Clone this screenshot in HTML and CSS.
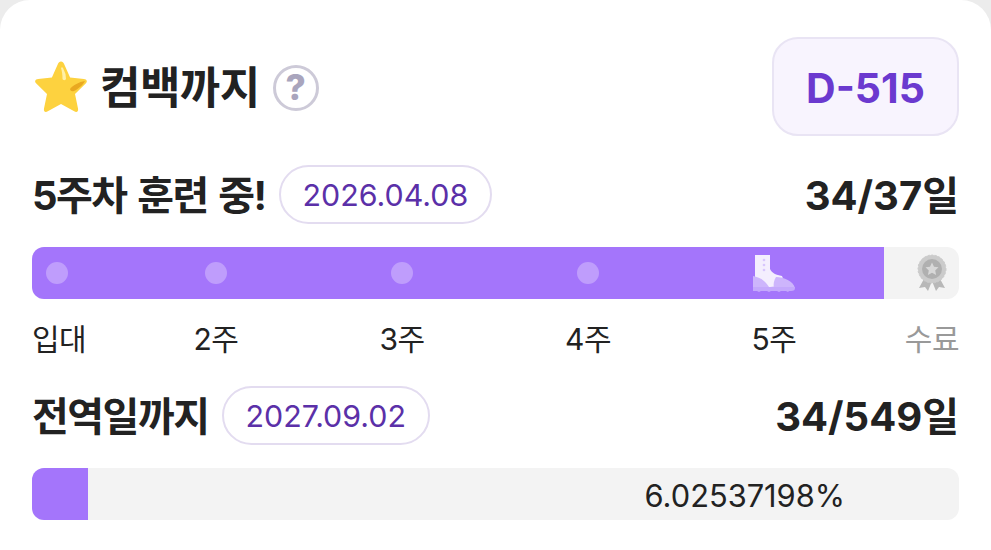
FILE: index.html
```html
<!DOCTYPE html>
<html lang="ko">
<head>
  <meta charset="UTF-8">
  <title>컴백까지</title>
  <link rel="stylesheet" href="styles.css">
</head>
<body>
<div class="card">
  <div class="head">
    <div class="head-title">
      <svg class="star" viewBox="0 0 54 54">
        <path d="M27 1.500c1.600 0 2.400 1 3.100 2.600l6 13.400 13.800 1.500c3 .3 3.900 2.600 1.800 4.600L41 34l3 14.500c.6 3-1.200 4.300-3.800 2.800L27 44l-13.200 7.300c-2.600 1.500-4.400.2-3.800-2.800L13 34 2.300 23.600c-2.100-2-1.200-4.300 1.800-4.600l13.800-1.500 6-13.400c.7-1.600 1.500-2.600 3.100-2.600z" fill="#fdd23f"/>
        <path d="M27 8c1 3 1.500 7 1.500 11 .5 1.500 3 1.500 3.500 0l-.5-5L29 8c-.5-1-1.500-1-2 0z" fill="#fff0a8"/>
        <path d="M36 29c3-4 9-7 15-8-2 4-7 8-11 10-2 .5-3.500.2-4-2z" fill="#e9a820"/>
      </svg>
      <h1 class="title">컴백까지</h1>
      <span class="help">?</span>
    </div>
    <div class="dday">D-515</div>
  </div>

  <div class="row">
    <div class="row-left">
      <h2 class="label">5주차 훈련 중!</h2>
      <span class="date">2026.04.08</span>
    </div>
    <div class="count">34/37일</div>
  </div>
  <div class="bar">
    <div class="fill" style="width: 91.9%"></div>
    <div class="steps">
      <div class="step"><i class="dot"></i></div>
      <div class="step"><i class="dot"></i></div>
      <div class="step"><i class="dot"></i></div>
      <div class="step"><i class="dot"></i></div>
      <div class="step">
        <svg class="boot" viewBox="0 0 44 38">
          <path d="M3 1h15v14c2 4 6 6 12 7l4 10L3 34z" fill="#f4eefe"/>
          <path d="M1 22c6 1 12 4 16 11H1z" fill="#cdb5fc"/>
          <path d="M24 23c8 0 17 4 19 11H22c-1-4 0-8 2-11z" fill="#cdb5fc"/>
          <path d="M1 33h42v1c0 2-1 3-4 3h-2l-1 1-2-1h-5l-2 1-2-1h-6l-2 1-2-1H9l-2 1-2-1H1z" fill="#c4a8fc"/>
          <circle cx="12" cy="6" r="1.300" fill="#d8c6fd"/>
          <circle cx="12" cy="11" r="1.300" fill="#d8c6fd"/>
          <circle cx="12" cy="16" r="1.300" fill="#d8c6fd"/>
        </svg>
      </div>
      <div class="step">
        <svg class="medal" viewBox="0 0 30 38">
          <path d="M8 23 2 34l6-1 3 4 4-10zM22 23l6 11-6-1-3 4-4-10z" fill="#b8b8b8"/>
          <circle cx="15" cy="15" r="14" fill="#cbcbcb" stroke="#cbcbcb" stroke-width="1" stroke-dasharray="2 1.600"/>
          <circle cx="15" cy="15" r="10" fill="#b0b0b0"/>
          <path d="m15 8.500 2 4.200 4.500.6-3.300 3.100.9 4.600-4.100-2.300-4.100 2.300.9-4.600-3.300-3.100 4.500-.6z" fill="#d8d8d8"/>
        </svg>
      </div>
    </div>
  </div>
  <div class="steps names">
    <div class="step">입대</div>
    <div class="step">2주</div>
    <div class="step">3주</div>
    <div class="step">4주</div>
    <div class="step">5주</div>
    <div class="step muted">수료</div>
  </div>

  <div class="row">
    <div class="row-left">
      <h2 class="label">전역일까지</h2>
      <span class="date">2027.09.02</span>
    </div>
    <div class="count">34/549일</div>
  </div>
  <div class="bar">
    <div class="fill" style="width: 6.025%"></div>
    <div class="percent">6.02537198%</div>
  </div>
</div>
</body>
</html>
```

FILE: styles.css
```css
html, body, h1, h2 {
  margin: 0;
  padding: 0;
}

html {
  background: #ececec;
}

body {
  width: 991px;
  height: 550px;
  overflow: hidden;
  font-family: Inter, "Noto Sans CJK KR", sans-serif;
  color: #222;
}

.card {
  height: 550px;
  box-sizing: border-box;
  padding: 37px 32px 30px;
  background: #fff;
  border-radius: 30px 30px 0 0;
}

.head {
  display: flex;
  align-items: center;
  justify-content: space-between;
}

.head-title {
  display: flex;
  align-items: center;
}

.star {
  width: 54px;
  height: 54px;
  margin: 0 12px 0 2px;
}

.title {
  padding-top: 2px;
  font-size: 44px;
  line-height: 50px;
  font-weight: 700;
  letter-spacing: -.6px;
}

.help {
  display: flex;
  align-items: center;
  justify-content: center;
  width: 46px;
  height: 46px;
  box-sizing: border-box;
  margin: 2px 0 0 13px;
  border: 3px solid #cdcad8;
  border-radius: 50%;
  color: #a9a5bd;
  font-size: 35px;
  line-height: 1;
  font-weight: 800;
}

.dday {
  display: flex;
  align-items: center;
  justify-content: center;
  width: 187px;
  height: 99px;
  box-sizing: border-box;
  padding-top: 2px;
  background: #f8f4fe;
  border: 2px solid #e9e4f4;
  border-radius: 26px;
  color: #6b39cf;
  font-size: 41px;
  font-weight: 700;
}

.row {
  display: flex;
  align-items: center;
  justify-content: space-between;
  margin-top: 29px;
}

.row-left {
  display: flex;
  align-items: center;
  gap: 13px;
}

.label {
  padding-top: 3px;
  font-size: 40px;
  line-height: 44px;
  font-weight: 700;
  letter-spacing: -1.500px;
  word-spacing: 2.500px;
}

.date {
  display: flex;
  align-items: center;
  height: 59px;
  box-sizing: border-box;
  padding: 0 22px;
  border: 2px solid #e3dcf0;
  border-radius: 30px;
  color: #5b30a8;
  font-size: 30.400px;
}

.count {
  padding-top: 3px;
  font-size: 40px;
  line-height: 44px;
  font-weight: 700;
}

.bar {
  position: relative;
  height: 52px;
  margin-top: 23px;
  background: #f3f3f3;
  border-radius: 12px;
  overflow: hidden;
}

.fill {
  position: absolute;
  top: 0;
  left: 0;
  bottom: 0;
  background: #a475fb;
}

.steps {
  display: grid;
  grid-template-columns: 91px repeat(4, 1fr) 92px;
}

.bar .steps {
  position: relative;
  height: 52px;
  align-items: center;
}

.step {
  display: flex;
  justify-content: center;
}

.bar .step:first-child {
  justify-self: start;
  width: 50px;
}

.bar .step:last-child {
  justify-self: end;
  width: 54px;
}

.dot {
  width: 22px;
  height: 22px;
  border-radius: 50%;
  background: #bf9dfc;
}

.boot {
  width: 44px;
  height: 38px;
}

.medal {
  width: 30px;
  height: 38px;
}

.names {
  margin-top: 23px;
  padding-bottom: 1px;
  font-size: 30px;
  line-height: 34px;
  letter-spacing: -.5px;
  white-space: nowrap;
}

.names .step:first-child {
  justify-content: flex-start;
}

.names .step:last-child {
  justify-content: flex-end;
}

.muted {
  color: #999;
}

.percent {
  position: relative;
  display: flex;
  align-items: center;
  justify-content: flex-end;
  height: 52px;
  box-sizing: border-box;
  padding: 3px 114px 0 0;
  font-size: 30.800px;
}
```
